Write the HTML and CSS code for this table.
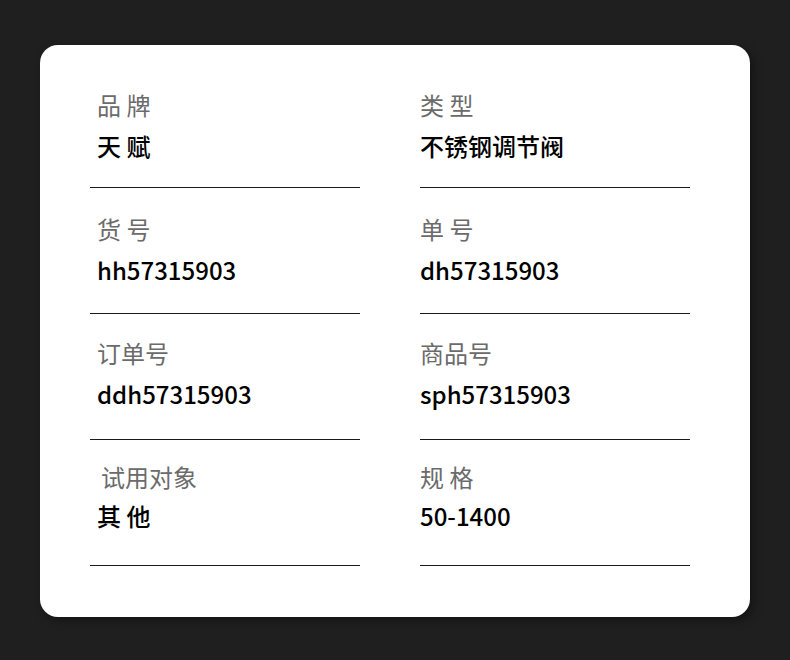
FILE: index.html
```html
<!DOCTYPE html>
<html lang="zh-CN">
<head>
    <meta charset="UTF-8" />
    <meta name="viewport" content="width=device-width, initial-scale=1.0" />
    <title>商品信息</title>
    <link rel="stylesheet" href="styles.css">
</head>
<body>
    <div class="card">
        <div class="info-grid">
            <div class="cell indent first">
                <div class="label">品 牌</div>
                <div class="value">天 赋</div>
            </div>
            <div class="cell first">
                <div class="label">类 型</div>
                <div class="value">不锈钢调节阀</div>
            </div>
            <div class="cell indent">
                <div class="label">货 号</div>
                <div class="value">hh57315903</div>
            </div>
            <div class="cell">
                <div class="label">单 号</div>
                <div class="value">dh57315903</div>
            </div>
            <div class="cell indent third">
                <div class="label">订单号</div>
                <div class="value">ddh57315903</div>
            </div>
            <div class="cell third">
                <div class="label">商品号</div>
                <div class="value">sph57315903</div>
            </div>
            <div class="cell indent last">
                <div class="label label-offset">试用对象</div>
                <div class="value">其 他</div>
            </div>
            <div class="cell last">
                <div class="label">规 格</div>
                <div class="value">50-1400</div>
            </div>
        </div>
    </div>
</body>
</html>
```

FILE: styles.css
```css
body {
    margin: 0;
    padding: 45px 40px 43px;
    background: #1f1f1f;
    font-family: "Noto Sans CJK SC", "Noto Sans", sans-serif;
}
.card {
    background: #fff;
    border-radius: 18px;
    padding: 17px 60px 51px 50px;
    box-shadow: 4px 4px 10px rgba(0, 0, 0, 0.35);
}
.info-grid {
    display: grid;
    grid-template-columns: 270px 270px;
    column-gap: 60px;
}
.cell {
    padding: 26px 0 28px;
    border-bottom: 1px solid #1a1a1a;
}
.cell.first {
    padding: 28px 0 26px;
}
.cell.third {
    padding: 24px 0 30px;
}
.cell.last {
    padding: 22px 0 34px;
}
.cell.indent {
    padding-left: 7px;
}
.label {
    font-size: 24px;
    line-height: 30px;
    color: #6b6b6b;
    margin-bottom: 11px;
}
.last .label {
    margin-bottom: 9px;
}
.label-offset {
    padding-left: 4px;
}
.value {
    font-size: 24px;
    line-height: 30px;
    font-weight: 500;
    color: #000;
}
```
